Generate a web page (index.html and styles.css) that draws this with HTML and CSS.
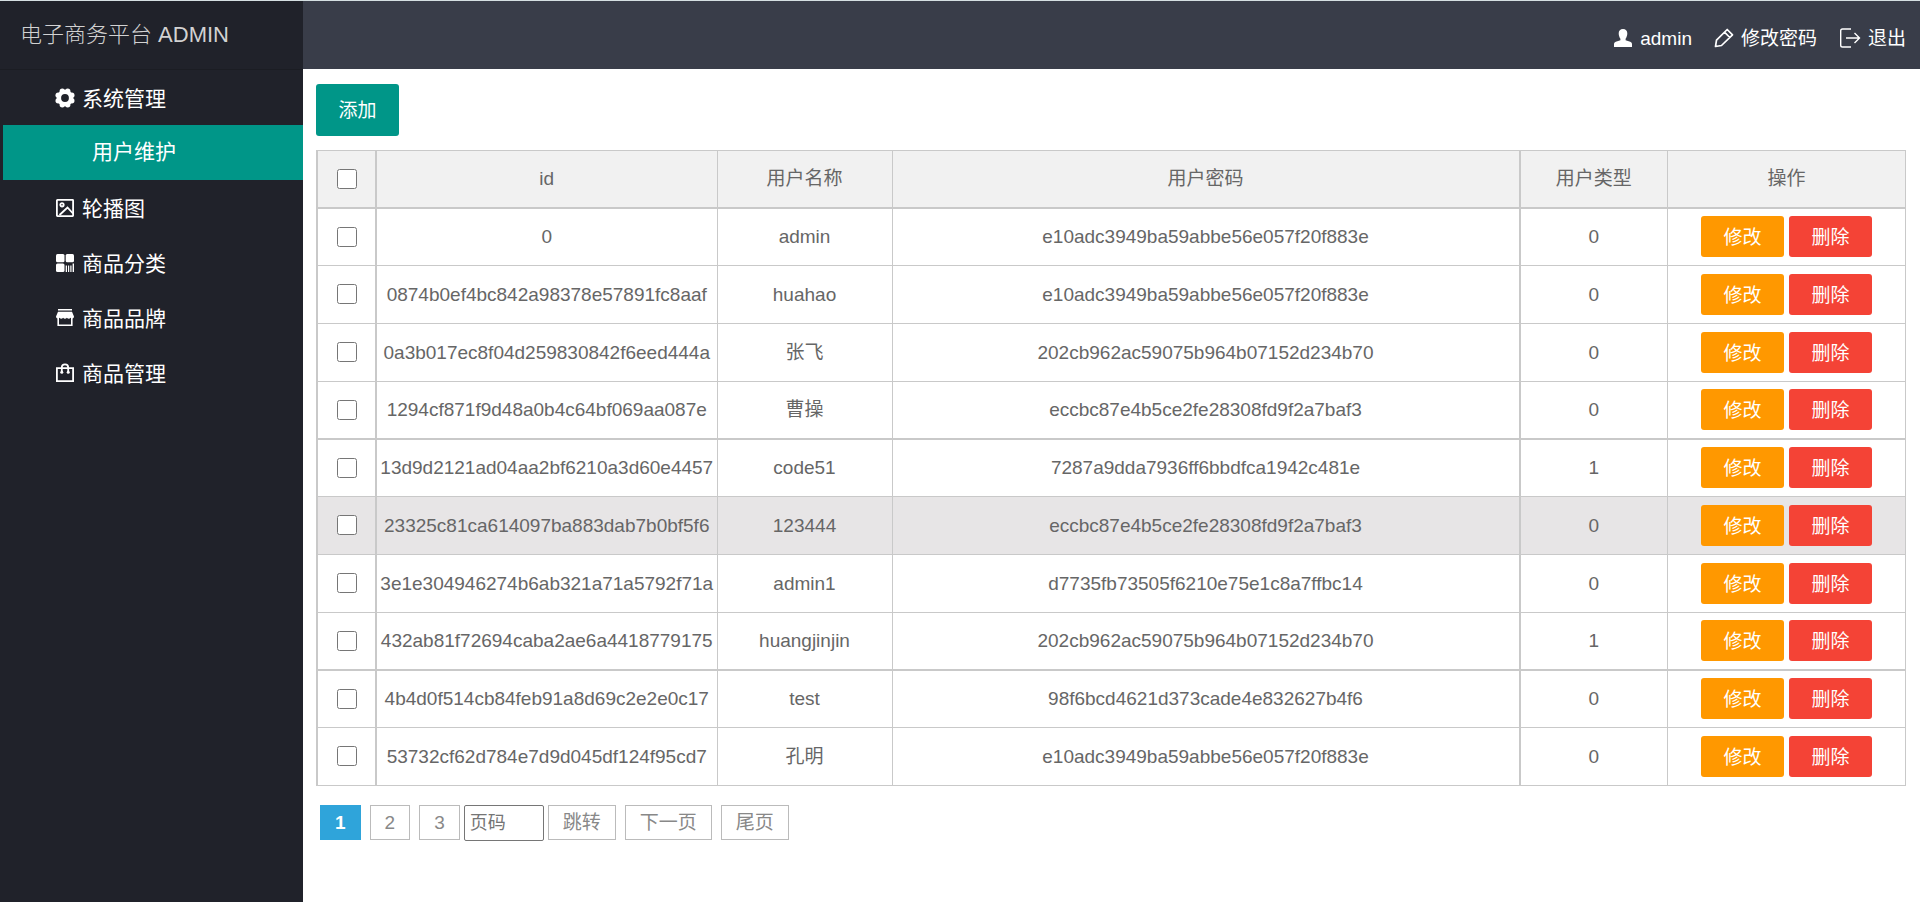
FILE: index.html
```html
<!DOCTYPE html>
<html lang="zh-CN">
<head>
    <meta charset="UTF-8">
    <meta name="viewport" content="width=device-width, initial-scale=1.0">
    <title>电子商务平台 ADMIN</title>
    <link rel="stylesheet" href="styles.css">
</head>
<body>
    <aside class="sidebar">
        <h1 class="logo">电子商务平台 ADMIN</h1>
        <nav class="menu">
            <a href="#" class="menu-item">
                <svg class="icon" viewBox="0 0 20 20" fill="currentColor"><circle cx="10" cy="10" r="6.100" fill="none" stroke="currentColor" stroke-width="4.400"/><circle cx="12.700" cy="3.200" r="2.700"/><circle cx="7.300" cy="3.200" r="2.700"/><circle cx="3.200" cy="7.300" r="2.700"/><circle cx="3.200" cy="12.700" r="2.700"/><circle cx="7.300" cy="16.800" r="2.700"/><circle cx="12.700" cy="16.800" r="2.700"/><circle cx="16.800" cy="12.700" r="2.700"/><circle cx="16.800" cy="7.300" r="2.700"/></svg>
                <span>系统管理</span>
            </a>
            <a href="#" class="menu-item child active">用户维护</a>
            <a href="#" class="menu-item">
                <svg class="icon" viewBox="0 0 20 20" fill="none" stroke="currentColor" stroke-width="1.800"><rect x="1.900" y="1.900" width="16.200" height="16.200" rx=".5"/><circle cx="7" cy="6.800" r="1.700"/><path d="M4.500 17 12.500 9.500l5.500 6"/></svg>
                <span>轮播图</span>
            </a>
            <a href="#" class="menu-item">
                <svg class="icon" viewBox="0 0 20 20" fill="currentColor"><rect x="1" y="1" width="8.500" height="8.300" rx="1.500"/><rect x="10.700" y="1" width="8.300" height="8.300" rx="1.500"/><rect x="1" y="10.500" width="8.500" height="8.500" rx="1.500"/><path d="M10.700 12.500h1.300V19h-1.300zM13 12.500h1.200V19H13zM15.300 12.500h1.200V19h-1.200zM17.600 10.500H19V19h-1.400z"/></svg>
                <span>商品分类</span>
            </a>
            <a href="#" class="menu-item">
                <svg class="icon" viewBox="0 0 20 20" fill="currentColor"><path d="M3 1h14v1.600H3zM3 3.700h14l2 4.800c0 2-2.200 2.600-3.400 1.200-1 1.400-2.700 1.400-3.700 0-1 1.400-2.800 1.400-3.800 0-1 1.400-2.700 1.400-3.700 0C3.200 11.100 1 10.500 1 8.500z"/><path fill="none" stroke="currentColor" stroke-width="1.600" d="M3.200 10v7.300h13.600V10"/></svg>
                <span>商品品牌</span>
            </a>
            <a href="#" class="menu-item">
                <svg class="icon" viewBox="0 0 20 20" fill="none" stroke="currentColor" stroke-width="1.800"><path d="M1.900 5.200h16.200v12.900H1.900zM6.800 9V4.500a3.200 3.200 0 0 1 6.400 0V9"/><circle cx="6.800" cy="9.200" r="1.500" fill="currentColor" stroke="none"/><circle cx="13.200" cy="9.200" r="1.500" fill="currentColor" stroke="none"/></svg>
                <span>商品管理</span>
            </a>
        </nav>
    </aside>

    <div class="page">
        <header class="header">
            <a href="#" class="header-link">
                <svg class="icon" viewBox="0 0 20 20" fill="currentColor"><path d="M10 1c2.700 0 4.300 1.800 4.300 4.300 0 2.300-.8 4.200-1.700 5.400v1.600l4.600 1.500c1.300.5 1.800 1.300 1.800 2.500V19H1v-2.700c0-1.200.5-2 1.800-2.500l4.600-1.500v-1.600C6.500 9.500 5.700 7.600 5.700 5.300 5.700 2.800 7.300 1 10 1z"/></svg>
                <span>admin</span>
            </a>
            <a href="#" class="header-link">
                <svg class="icon" viewBox="0 0 20 20" fill="none" stroke="currentColor" stroke-width="1.700" stroke-linejoin="round"><path d="M13.200 1.500 18.500 6.800 7.500 17.500 1.500 18.500 2.500 12.200zM10.500 4.200l5.300 5.300"/></svg>
                <span>修改密码</span>
            </a>
            <a href="#" class="header-link">
                <svg class="icon wide" viewBox="0 0 22 20" fill="none" stroke="currentColor" stroke-width="1.400"><path d="M12 1H3.500Q1.700 1 1.700 2.800v14.400Q1.700 19 3.500 19H12M7 10h13.500M15.500 5l5 5-5 5"/></svg>
                <span>退出</span>
            </a>
        </header>

        <main class="content">
            <button type="button" class="btn btn-add">添加</button>

            <table class="table">
                <colgroup>
                    <col class="col-check">
                    <col class="col-id">
                    <col class="col-name">
                    <col class="col-password">
                    <col class="col-type">
                    <col class="col-action">
                </colgroup>
                <thead>
                    <tr>
                        <th><input type="checkbox" id="checkAll" aria-label="全选"></th>
                        <th>id</th>
                        <th>用户名称</th>
                        <th>用户密码</th>
                        <th>用户类型</th>
                        <th>操作</th>
                    </tr>
                </thead>
                <tbody id="userList"></tbody>
            </table>

            <div class="pagination">
                <a href="#" class="current">1</a>
                <a href="#">2</a>
                <a href="#">3</a>
                <input type="text" placeholder="页码" aria-label="页码">
                <button type="button">跳转</button>
                <a href="#">下一页</a>
                <a href="#">尾页</a>
            </div>
        </main>
    </div>

    <script src="script.js"></script>
</body>
</html>
```
FILE: styles.css
```css
* {
    margin: 0;
    padding: 0;
    box-sizing: border-box;
}

body {
    display: flex;
    min-height: 100vh;
    border-top: 1px solid #d5dfe2;
    background: #fff;
    color: #666;
    font-family: "Liberation Sans", "Noto Sans CJK SC", sans-serif;
    font-size: 19px;
    line-height: 24px;
}

a {
    color: inherit;
    text-decoration: none;
}

.icon {
    width: 20px;
    height: 20px;
    flex: none;
}

.icon.wide {
    width: 22px;
}

/* 左侧菜单 */
.sidebar {
    width: 303px;
    flex: none;
    background: #20222a;
}

.logo {
    height: 69px;
    padding-left: 20px;
    border-bottom: 1px solid #1b1d23;
    color: #d2d2d2;
    font-size: 22px;
    font-weight: 300;
    line-height: 67px;
}

.menu {
    padding-left: 3px;
}

.menu-item {
    display: flex;
    align-items: center;
    gap: 7px;
    height: 55px;
    padding: 2px 0 0 52px;
    color: #fff;
    font-size: 21px;
}

.menu-item .icon,
.header-link .icon {
    margin-bottom: 2px;
}

.menu-item.child {
    padding: 0 0 1px 89px;
}

.menu-item.active {
    background: #009688;
}

/* 顶部 */
.page {
    flex: 1;
    min-width: 0;
}

.header {
    display: flex;
    align-items: center;
    justify-content: flex-end;
    gap: 22px;
    height: 68px;
    padding: 7px 14px 0 0;
    background: #393d49;
    color: #fff;
}

.header-link {
    display: flex;
    align-items: center;
    gap: 7px;
}

/* 内容 */
.content {
    padding: 15px 14px 15px 13px;
}

.btn {
    width: 83px;
    height: 41px;
    padding-bottom: 3px;
    border: none;
    border-radius: 3px;
    color: #fff;
    font-family: inherit;
    font-size: 19px;
    cursor: pointer;
}

.btn-add {
    display: block;
    height: 52px;
    margin-bottom: 14px;
    background: #009688;
}

.btn-edit {
    margin-right: 5px;
    background: #ff9800;
}

.btn-delete {
    background: #f44336;
}

.table {
    width: 100%;
    border-collapse: collapse;
    table-layout: fixed;
}

.table th,
.table td {
    height: 58px;
    border: 1px solid #c9c9c9;
    font-weight: 400;
    text-align: center;
    white-space: nowrap;
}

.table th {
    height: 57px;
    border-bottom-width: 2px;
    background: #f1f1f1;
}

.table tr:nth-child(4n) td {
    height: 57px;
    border-bottom-width: 2px;
}

.table th:first-child,
.table td:first-child {
    border-left-width: 2px;
    border-right-width: 2px;
}

.table th:nth-child(5),
.table td:nth-child(5) {
    border-left-width: 2px;
}

.table tr.hover {
    background: #e7e5e6;
}

.table input {
    width: 20px;
    height: 20px;
    margin-bottom: 2px;
    vertical-align: middle;
}

.col-check {
    width: 59px;
}

.col-id {
    width: 341px;
}

.col-name {
    width: 175px;
}

.col-type {
    width: 148px;
}

.col-action {
    width: 238px;
}

/* 分页 */
.pagination {
    display: flex;
    gap: 9px;
    padding: 19px 0 0 4px;
}

.pagination a,
.pagination button {
    height: 35px;
    padding: 0 14px;
    border: 1px solid #bbb;
    background: #fff;
    color: #888;
    font-family: inherit;
    font-size: 19px;
    line-height: 33px;
}

.pagination .current {
    border-color: #2fa4da;
    background: #2fa4da;
    color: #fff;
    font-weight: bold;
}

.pagination input {
    width: 80px;
    height: 36px;
    margin: 0 -5px;
    padding: 0 5px;
    border: 1px solid #767676;
    border-radius: 2px;
    font-family: inherit;
    font-size: 18px;
}
```
FILE: script.js
```js
const users = [
    ['0', 'admin', 'e10adc3949ba59abbe56e057f20f883e', 0],
    ['0874b0ef4bc842a98378e57891fc8aaf', 'huahao', 'e10adc3949ba59abbe56e057f20f883e', 0],
    ['0a3b017ec8f04d259830842f6eed444a', '张飞', '202cb962ac59075b964b07152d234b70', 0],
    ['1294cf871f9d48a0b4c64bf069aa087e', '曹操', 'eccbc87e4b5ce2fe28308fd9f2a7baf3', 0],
    ['13d9d2121ad04aa2bf6210a3d60e4457', 'code51', '7287a9dda7936ff6bbdfca1942c481e', 1],
    ['23325c81ca614097ba883dab7b0bf5f6', '123444', 'eccbc87e4b5ce2fe28308fd9f2a7baf3', 0],
    ['3e1e304946274b6ab321a71a5792f71a', 'admin1', 'd7735fb73505f6210e75e1c8a7ffbc14', 0],
    ['432ab81f72694caba2ae6a4418779175', 'huangjinjin', '202cb962ac59075b964b07152d234b70', 1],
    ['4b4d0f514cb84feb91a8d69c2e2e0c17', 'test', '98f6bcd4621d373cade4e832627b4f6', 0],
    ['53732cf62d784e7d9d045df124f95cd7', '孔明', 'e10adc3949ba59abbe56e057f20f883e', 0]
];

const userList = document.getElementById('userList');

users.forEach((user, index) => {
    const tr = document.createElement('tr');
    if (index === 5) {
        tr.className = 'hover';
    }
    tr.innerHTML = `
        <td><input type="checkbox" aria-label="选择 ${user[0]}"></td>
        ${user.map(value => `<td>${value}</td>`).join('')}
        <td><button type="button" class="btn btn-edit">修改</button><button type="button" class="btn btn-delete">删除</button></td>
    `;
    userList.appendChild(tr);
});

// 全选
document.getElementById('checkAll').addEventListener('change', (e) => {
    userList.querySelectorAll('input').forEach(input => {
        input.checked = e.target.checked;
    });
});
```
